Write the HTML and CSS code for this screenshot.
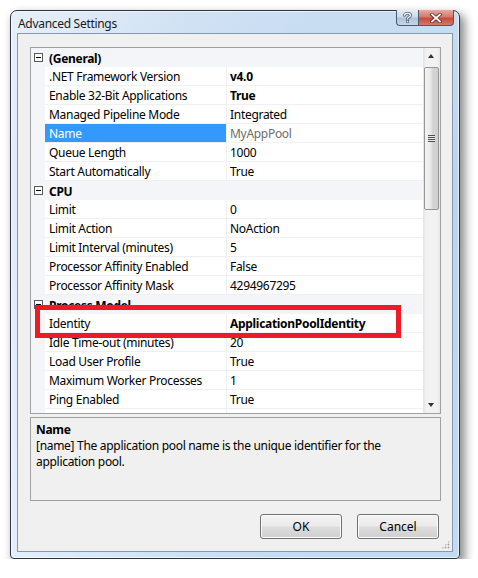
FILE: index.html
```html
<!DOCTYPE html>
<html lang="en">
<head>
<meta charset="utf-8">
<title>Advanced Settings</title>
<link rel="stylesheet" href="styles.css">
</head>
<body>
<div class="window">
  <div class="titlebar">
    <span class="title">Advanced Settings</span>
    <div class="caption-buttons">
      <div class="cap help">
        <svg width="9" height="11" viewBox="0 0 9 11">
          <path d="M1.5 3.2 C1.5 0.8 7.5 0.8 7.5 3.2 C7.5 5.2 4.5 5 4.5 7" fill="none" stroke="#5a6676" stroke-width="3" stroke-linecap="round"/>
          <path d="M1.5 3.2 C1.5 0.8 7.5 0.8 7.5 3.2 C7.5 5.2 4.5 5 4.5 7" fill="none" stroke="#ffffff" stroke-width="1.2" stroke-linecap="round"/>
          <rect x="3" y="8.2" width="3" height="2.6" fill="#5a6676"/>
          <rect x="3.8" y="8.9" width="1.4" height="1.2" fill="#ffffff"/>
        </svg>
      </div>
      <div class="cap close">
        <svg width="12" height="10" viewBox="0 0 12 10">
          <path d="M2 1.5 L10 8.5 M10 1.5 L2 8.5" stroke="#6b2a2a" stroke-width="3.6" stroke-linecap="square"/>
          <path d="M2 1.5 L10 8.5 M10 1.5 L2 8.5" stroke="#ffffff" stroke-width="1.8" stroke-linecap="square"/>
        </svg>
      </div>
    </div>
  </div>

  <div class="client">
    <div class="grid">
      <div class="rows">
        <div class="cat"><span class="toggle"></span><span class="cat-name">(General)</span></div>
        <div class="prop"><span class="k">.NET Framework Version</span><span class="v strong">v4.0</span></div>
        <div class="prop"><span class="k">Enable 32-Bit Applications</span><span class="v strong">True</span></div>
        <div class="prop"><span class="k">Managed Pipeline Mode</span><span class="v">Integrated</span></div>
        <div class="prop selected"><span class="k">Name</span><span class="v muted">MyAppPool</span></div>
        <div class="prop"><span class="k">Queue Length</span><span class="v">1000</span></div>
        <div class="prop"><span class="k">Start Automatically</span><span class="v">True</span></div>

        <div class="cat"><span class="toggle"></span><span class="cat-name">CPU</span></div>
        <div class="prop"><span class="k">Limit</span><span class="v">0</span></div>
        <div class="prop"><span class="k">Limit Action</span><span class="v">NoAction</span></div>
        <div class="prop"><span class="k">Limit Interval (minutes)</span><span class="v">5</span></div>
        <div class="prop"><span class="k">Processor Affinity Enabled</span><span class="v">False</span></div>
        <div class="prop"><span class="k">Processor Affinity Mask</span><span class="v">4294967295</span></div>

        <div class="cat"><span class="toggle"></span><span class="cat-name">Process Model</span></div>
        <div class="prop"><span class="k">Identity</span><span class="v strong">ApplicationPoolIdentity</span></div>
        <div class="prop"><span class="k">Idle Time-out (minutes)</span><span class="v">20</span></div>
        <div class="prop"><span class="k">Load User Profile</span><span class="v">True</span></div>
        <div class="prop"><span class="k">Maximum Worker Processes</span><span class="v">1</span></div>
        <div class="prop"><span class="k">Ping Enabled</span><span class="v">True</span></div>
        <div class="prop"><span class="k"></span><span class="v"></span></div>
      </div>

      <div class="vscroll">
        <div class="arrow up"></div>
        <div class="track">
          <div class="thumb"><span class="grip-lines"></span></div>
        </div>
        <div class="arrow down"></div>
      </div>
    </div>

    <div class="desc">
      <div class="desc-title">Name</div>
      <div class="desc-text">[name] The application pool name is the unique identifier for the application pool.</div>
    </div>

    <div class="actions">
      <button class="btn" type="button">OK</button>
      <button class="btn" type="button">Cancel</button>
    </div>
    <div class="size-grip"></div>
  </div>

  <div class="callout"></div>
</div>
</body>
</html>
```

FILE: styles.css
```css
html, body {
  margin: 0;
  padding: 0;
  background: #ffffff;
}

body {
  padding: 10px 0 0 10px;
  font-family: "Noto Sans", "Open Sans", sans-serif;
  font-size: 12px;
  letter-spacing: -0.3px;
  color: #000;
}

/* dialog frame */
.window {
  position: relative;
  box-sizing: border-box;
  width: 450px;
  height: 549px;
  border: 1px solid #2d3440;
  border-radius: 7px 7px 4px 4px;
  padding: 0 6px 6px 6px;
  display: flex;
  flex-direction: column;
  background:
    linear-gradient(90deg, rgba(255,255,255,0.55) 0%, rgba(255,255,255,0.15) 40%, rgba(255,255,255,0) 70%),
    linear-gradient(180deg, #c9ddf2 0%, #bcd5ee 30%, #c2dbf4 100%);
  box-shadow: 4px 5px 10px 1px rgba(0, 0, 0, 0.45), 0 0 0 1px rgba(255,255,255,0.6) inset;
}

.titlebar {
  height: 22px;
  display: flex;
  align-items: flex-start;
  position: relative;
}

.title {
  padding: 6px 0 0 1px;
  font-size: 12px;
  line-height: 14px;
  color: #1b1b1b;
}

.caption-buttons {
  margin-left: auto;
  margin-right: -1px;
  display: flex;
  height: 16px;
  margin-top: -1px;
}

.cap {
  box-sizing: border-box;
  height: 16px;
  display: flex;
  align-items: center;
  justify-content: center;
  border: 1px solid #4d5a6c;
  border-top: none;
}

.help {
  width: 22px;
  border-radius: 0 0 0 4px;
  border-right: none;
  background: linear-gradient(180deg, #e5edf6 0%, #cbd9e8 45%, #aec2d8 55%, #c7d7e8 100%);
}

.close {
  width: 36px;
  border-radius: 0 0 4px 0;
  background: linear-gradient(180deg, #e9a99f 0%, #d8786b 45%, #c24e3e 55%, #d47a63 100%);
}

/* client area */
.client {
  flex: 1;
  position: relative;
  box-sizing: border-box;
  border: 1px solid #8598ae;
  background: #f0f0f0;
  padding: 13px 11px 0 12px;
  display: flex;
  flex-direction: column;
}

/* property grid */
.grid {
  box-sizing: border-box;
  width: 411px;
  height: 367px;
  border: 1px solid #a0a0a0;
  display: flex;
  background: #f3f5f9;
}

.rows {
  width: 392px;
  overflow: hidden;
  background: #f3f5f9;
}

.cat,
.prop {
  height: 19px;
  box-sizing: border-box;
  display: flex;
  align-items: center;
  padding-top: 1px;
  line-height: 17px;
  white-space: nowrap;
}

.cat {
  font-weight: bold;
  background: #f3f5f9;
}

.toggle {
  position: relative;
  box-sizing: border-box;
  width: 9px;
  height: 9px;
  margin: 0 6px 1px 3px;
  border: 1px solid #5a5a5a;
  background: #fff;
}

.toggle::after {
  content: "";
  position: absolute;
  left: 1px;
  top: 3px;
  width: 5px;
  height: 1px;
  background: #000;
}

.prop {
  margin-left: 14px;
  border-bottom: 1px solid #eef0f4;
  background: #fff;
}

.k {
  box-sizing: border-box;
  width: 182px;
  height: 18px;
  margin-top: -1px;
  padding: 1px 0 0 4px;
  border-right: 1px solid #eef0f4;
  overflow: hidden;
}

.v {
  padding-left: 3px;
}

.strong {
  font-weight: bold;
}

.muted {
  color: #6d6d6d;
}

.selected .k {
  background: #3399ff;
  color: #fff;
}

/* vertical scrollbar */
.vscroll {
  width: 17px;
  display: flex;
  flex-direction: column;
  background: linear-gradient(90deg, #e3e3e3 0%, #f2f2f2 20%, #f2f2f2 80%, #e8e8e8 100%);
}

.arrow {
  height: 17px;
  position: relative;
}

.arrow::after {
  content: "";
  position: absolute;
  left: 5px;
  width: 0;
  height: 0;
  border-left: 3.5px solid transparent;
  border-right: 3.5px solid transparent;
}

.arrow.up::after {
  top: 6px;
  border-bottom: 4px solid #333;
}

.arrow.down::after {
  bottom: 6px;
  border-top: 4px solid #333;
}

.track {
  flex: 1;
  padding: 2px 1px 0 1px;
}

.thumb {
  box-sizing: border-box;
  height: 143px;
  border: 1px solid #959595;
  border-radius: 2px;
  background: linear-gradient(90deg, #f4f4f4 0%, #e8e8e8 45%, #d6d6d6 55%, #cfcfcf 100%);
  display: flex;
  align-items: center;
  justify-content: center;
}

.grip-lines {
  width: 7px;
  height: 7px;
  background: repeating-linear-gradient(180deg, #505050 0, #505050 1px, #e8e8e8 1px, #e8e8e8 2px);
}

/* description panel */
.desc {
  box-sizing: border-box;
  width: 411px;
  height: 84px;
  margin-top: 3px;
  border: 1px solid #a0a0a0;
  padding: 4px 5px 3px;
  line-height: 16px;
}

.desc-title {
  font-weight: bold;
}

/* dialog buttons */
.actions {
  display: flex;
  justify-content: flex-end;
  gap: 15px;
  width: 409px;
  margin-top: 13px;
}

.btn {
  box-sizing: border-box;
  width: 82px;
  height: 25px;
  border: 1px solid #707070;
  border-radius: 3px;
  font: inherit;
  color: #000;
  background: linear-gradient(180deg, #f2f2f2 0%, #ebebeb 48%, #dddddd 52%, #cfcfcf 100%);
  box-shadow: inset 0 0 0 1px #fcfcfc;
  padding: 0;
}

.size-grip {
  position: absolute;
  right: 2px;
  bottom: 2px;
  width: 9px;
  height: 9px;
  background:
    radial-gradient(circle, #a8a8a8 0.8px, transparent 1.2px) 0 0 / 3px 3px;
  clip-path: polygon(100% 0, 100% 100%, 0 100%);
}

/* red emphasis frame over the Identity row */
.callout {
  position: absolute;
  left: 24px;
  top: 294px;
  width: 366px;
  height: 33px;
  box-sizing: border-box;
  border: 5px solid #ed1c24;
}
```
